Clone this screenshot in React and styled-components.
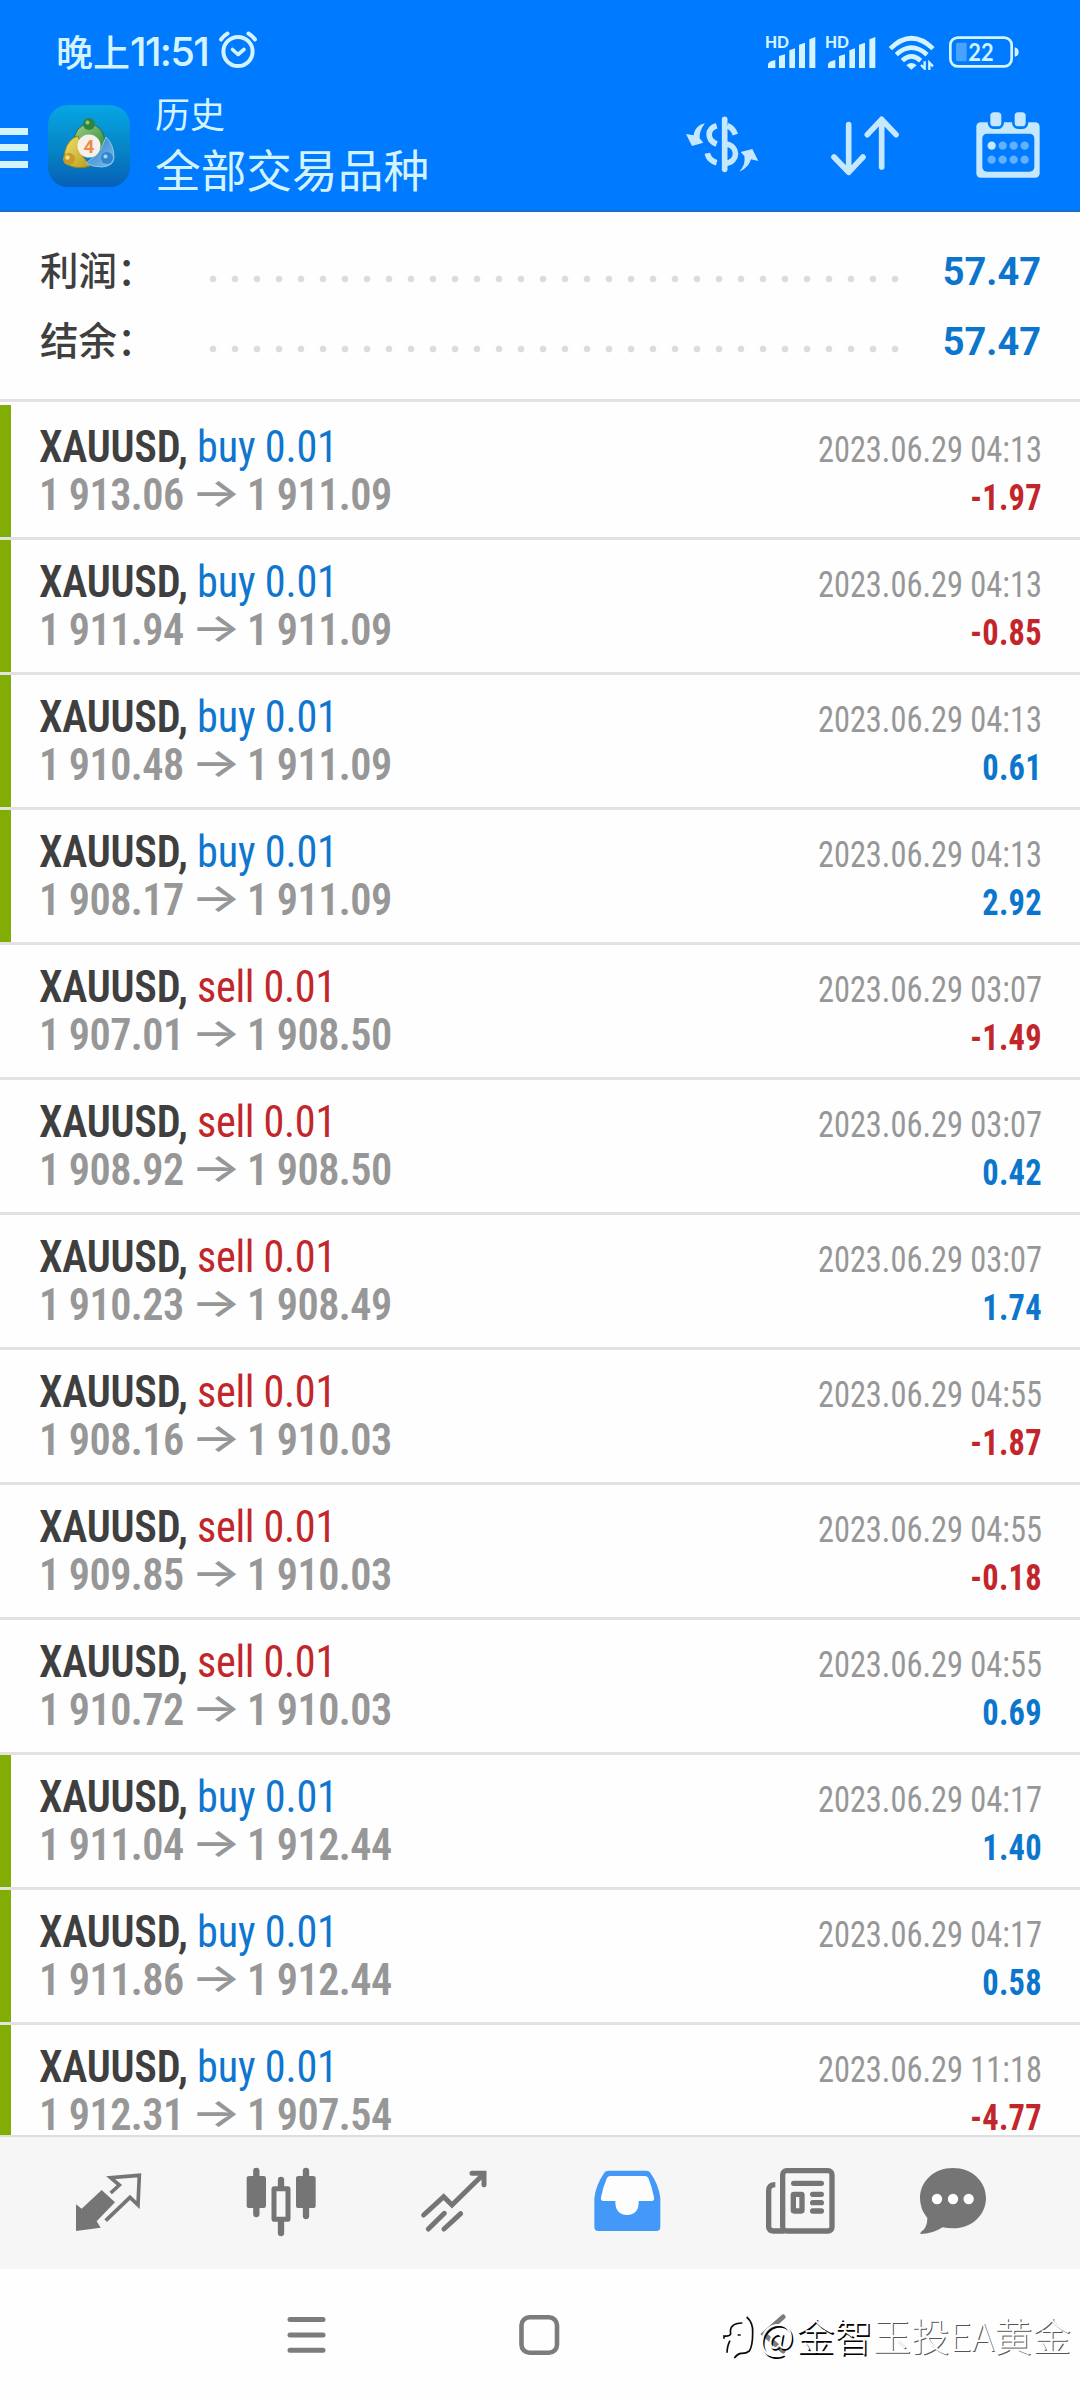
import React from "react";
import styled, { createGlobalStyle, css } from "styled-components";

const color = {
  blue: "#007aff",
  ice: "#d3f3ff",
  iconIce: "#c6e8fc",
  text: "#3f3f3f",
  grey: "#979797",
  icon: "#757575",
  line: "#e2e2e2",
  bar: "#f6f6f6",
  buy: "#0f76cf",
  sell: "#c2262a",
  profit: "#0b76cc",
  green: "#81ad04",
};

const cjk = `"Noto Sans CJK SC", sans-serif`;
const condensed = `"Roboto Condensed", Roboto, sans-serif`;

const GlobalStyle = createGlobalStyle`
  * {
    box-sizing: border-box;
  }
  body {
    margin: 0;
    background: #fdfdfd;
    font-family: Roboto, ${cjk};
    color: ${color.text};
  }
`;

const Screen = styled.div`
  width: 1080px;
  height: 2400px;
  display: flex;
  flex-direction: column;
  overflow: hidden;
  background: #fefefe;
`;

const Header = styled.header`
  height: 212px;
  flex: none;
  background: ${color.blue};
  border-bottom: 2px solid #1a6fca;
  color: ${color.ice};
`;

const StatusBar = styled.div`
  height: 76px;
  padding: 24px 56px 0 56px;
  display: flex;
  align-items: center;
  justify-content: space-between;
`;

const Clock = styled.div`
  display: flex;
  align-items: center;
  font: 500 37px/52px ${cjk};
`;

const ClockText = styled.span`
  display: flex;
  padding-top: 2px;
`;

const Time = styled.span`
  font: 500 40px/52px Inter, sans-serif;
  letter-spacing: -1.7px;
  margin: 1px 10px 0 0;
`;

const StatusIcons = styled.div`
  display: flex;
`;

const Toolbar = styled.div`
  height: 135px;
  display: flex;
  align-items: center;
  padding-right: 32px;
`;

const MenuButton = styled.div`
  width: 28px;
  height: 40px;
  margin-top: 8px;
  display: flex;
  flex-direction: column;
  justify-content: space-between;
`;

const MenuBar = styled.span`
  height: 7px;
  background: ${color.ice};
`;

const Logo = styled.svg`
  width: 82px;
  height: 82px;
  margin: 5px 0 0 20px;
`;

const Titles = styled.div`
  flex: 1;
  margin-left: 25px;
  display: flex;
  flex-direction: column;
  font-family: ${cjk};
`;

const Caption = styled.span`
  font-size: 35px;
  line-height: 48px;
`;

const Title = styled.span`
  font-size: 45.7px;
  line-height: 62px;
`;

const ToolbarIcons = styled.div`
  display: flex;
  gap: 63px;
`;

const Summary = styled.section`
  height: 190px;
  flex: none;
  padding: 24px 39px 0 40px;
  border-bottom: 3px solid ${color.line};
`;

const SummaryRow = styled.div`
  height: 70px;
  display: flex;
  align-items: center;
`;

const SummaryLabel = styled.span`
  width: 162px;
  margin-top: -7px;
  font: 500 38.5px/70px ${cjk};
`;

const Dots = styled.span`
  width: 704px;
  height: 22px;
  margin-top: 15px;
  background: radial-gradient(circle, #dcdcdc 2.8px, transparent 3.8px) 0 0 / 22px 22px;
`;

const SummaryValue = styled.span`
  flex: 1;
  margin-top: 2px;
  text-align: right;
  font: 700 38px/70px Roboto, sans-serif;
  color: ${color.profit};
`;

const Deals = styled.main`
  height: 1733px;
  flex: none;
  padding-top: 3px;
  overflow: hidden;
`;

const Deal = styled.div`
  height: 135px;
  padding: 18px 38px 0 39px;
  display: flex;
  justify-content: space-between;
  border-bottom: 3px solid ${color.line};
  ${(props) =>
    props.$marked &&
    css`
      background: linear-gradient(${color.green}, ${color.green}) 0 0 / 11px 100% no-repeat;
    `}
  font-family: ${condensed};
`;

const DealSide = styled.div`
  display: flex;
  flex-direction: column;
  line-height: 48px;
  white-space: pre;
  ${(props) =>
    props.$end
      ? css`
          align-items: flex-end;
          padding-top: 3px;
          font-size: 36px;
          transform: scaleX(0.9);
          transform-origin: right;
        `
      : css`
          font-size: 44px;
          transform: scaleX(0.96);
          transform-origin: left;
        `}
`;

const Symbol = styled.span`
  font-weight: 600;
  letter-spacing: -0.25px;
`;

const Side = styled.span`
  color: ${(props) => (props.$type === "buy" ? color.buy : color.sell)};
  letter-spacing: ${(props) => (props.$type === "buy" ? -0.2 : -0.35)}px;
`;

const Prices = styled.span`
  display: flex;
  font-weight: 600;
  letter-spacing: -0.6px;
  color: ${color.grey};
`;

const Arrow = styled.span`
  width: 66px;
  text-align: center;
  font: 500 40px/44px Inter, sans-serif;
  transform: scaleX(1.38);
`;

const Date = styled.span`
  color: ${color.grey};
`;

const Profit = styled.span`
  font-weight: 700;
  letter-spacing: 0.3px;
  color: ${(props) => (props.$loss ? color.sell : color.profit)};
`;

const TabBar = styled.nav`
  height: 134px;
  flex: none;
  padding-left: 21px;
  display: flex;
  align-items: center;
  background: ${color.bar};
  border-top: 2px solid #dedede;
`;

const Tab = styled.div`
  width: ${(props) => (props.$last ? 131 : 173)}px;
  display: flex;
  justify-content: center;
  color: ${(props) => (props.$active ? "#4499f8" : color.icon)};
`;

const SystemBar = styled.footer`
  flex: 1;
  position: relative;
  display: flex;
  align-items: flex-start;
  gap: 192px;
  padding: 44px 0 0 286px;
  color: #7c7c7c;
`;

const Watermark = styled.div`
  position: absolute;
  left: 720px;
  top: 37px;
  display: flex;
  align-items: center;
  white-space: nowrap;
  font: 300 38.4px/56px ${cjk};
  color: #fff;
  text-shadow: 1px 1px 0 #555;
`;

const Strong = styled.span`
  text-shadow: 1.5px 1.5px 0 #000;
`;

const At = styled(Strong)`
  margin-right: 2px;
`;

const AlarmIcon = () => (
  <svg width="40" height="40" viewBox="0 0 40 40" fill="none" stroke="currentColor" strokeWidth="4" strokeLinecap="round" strokeLinejoin="round">
    <circle cx="20" cy="21.5" r="14.6" />
    <path d="M14.5 19.5l5.5 5 6-5" strokeWidth="3.6" />
    <path d="M3 9.5Q6 5.5 9.5 3.5M37 9.5Q34 5.5 30.5 3.5" />
  </svg>
);

const SignalIcon = () => (
  <svg width="60" height="40" viewBox="370 90 180 120" fill="currentColor">
    <text x="373" y="145" fontFamily="Lato, sans-serif" fontWeight="900" fontSize="49" textLength="72" lengthAdjust="spacingAndGlyphs">
      HD
    </text>
    <path d="M382 204v-12q3-9 22-12v24zM415 204v-36l18-5v41zM446 204v-53l17-6v59zM475 204v-70l18-6v76zM506 204v-86l18-7v93z" />
  </svg>
);

const WifiIcon = () => (
  <svg width="55" height="40" viewBox="730 90 165 120" fill="none" stroke="currentColor" strokeWidth="14">
    <path d="M749 146Q812 84 877 146M767 164Q812 122 859 164M785 182Q812 156 840 182" />
    <path d="M797 196Q812 182 828 196L812 209Z" fill="currentColor" stroke="none" />
    <path d="M842 182v30h40v-32z" fill={color.blue} stroke="none" />
    <path d="M852 184v22l-11-11M866 210v-22l11 11" strokeWidth="7" />
  </svg>
);

const BatteryIcon = () => (
  <svg width="85" height="40" viewBox="895 90 255 120">
    <rect x="929" y="113" width="184" height="86" rx="22" fill="none" stroke="currentColor" strokeWidth="8" />
    <path d="M952 128h26v56h-26q-6 0-6-6v-44q0-6 6-6z" fill="#4aa2ff" />
    <path d="M1122 142q12 2 12 14t-12 14z" fill="currentColor" />
    <text x="983" y="184" fill="currentColor" fontFamily="Lato, sans-serif" fontWeight="700" fontSize="74" textLength="76" lengthAdjust="spacingAndGlyphs">
      22
    </text>
  </svg>
);

const AppLogo = () => (
  <Logo viewBox="0 0 82 82">
    <defs>
      <linearGradient id="tile" x1="0" y1="0" x2="0" y2="1">
        <stop offset="0" stopColor="#06a6e4" />
        <stop offset="0.55" stopColor="#0684c6" />
        <stop offset="1" stopColor="#075fb6" />
      </linearGradient>
      <linearGradient id="leaf" x1="0" y1="0" x2="1" y2="1">
        <stop offset="0" stopColor="#9fd08a" />
        <stop offset="1" stopColor="#2f8a35" />
      </linearGradient>
      <linearGradient id="gold" x1="0" y1="0" x2="1" y2="1">
        <stop offset="0" stopColor="#f3e36a" />
        <stop offset="1" stopColor="#b99a1c" />
      </linearGradient>
      <linearGradient id="sky" x1="0" y1="0" x2="1" y2="1">
        <stop offset="0" stopColor="#2a78c0" />
        <stop offset="1" stopColor="#7fc0ee" />
      </linearGradient>
    </defs>
    <rect width="82" height="82" rx="20" fill="url(#tile)" />
    <path d="M26 38Q26 20 41 19Q56 20 57 38L50 46L41 36L32 42Z" fill="url(#leaf)" stroke="#2c6b3c" />
    <path d="M30 31Q20 34 17 46Q14 58 20 60Q30 65 42 61L34 50L33 40Z" fill="url(#gold)" stroke="#8c8427" />
    <path d="M58 32Q66 40 66 52Q66 61 54 62Q44 62 38 58L46 52L53 44Z" fill="url(#sky)" stroke="#8fc4e6" />
    <circle cx="41" cy="19" r="6" fill="#2f8440" />
    <circle cx="39.5" cy="17.5" r="2" fill="#8ecb8b" />
    <circle cx="21" cy="54" r="6" fill="#c79a2c" />
    <circle cx="19.5" cy="52.5" r="2.2" fill="#f4dc80" />
    <circle cx="59" cy="53" r="6" fill="#2f86cf" />
    <circle cx="57.5" cy="51.5" r="2" fill="#a5d6f4" />
    <circle cx="41" cy="41" r="11.5" fill="#f5f1ea" />
    <text x="41" y="47.5" textAnchor="middle" fontFamily="Roboto, sans-serif" fontWeight="700" fontSize="19" fill="#ee8a4a">
      4
    </text>
  </Logo>
);

const CurrencyIcon = () => (
  <svg width="80" height="80" viewBox="36 12 240 240" fill="none" stroke={color.iconIce} strokeWidth="17">
    <path
      d="M105 70C85 74 73 88 71 106L48 102L66 138L100 128L89 115C88 98 94 84 105 70ZM208 215C228 206 238 194 243 178L265 183L247 147L212 156L223 168C226 188 220 202 208 215Z"
      fill={color.iconIce}
      stroke="none"
    />
    <path d="M164 58V208" strokeLinecap="round" />
    <path d="M140 77C110 86 110 120 140 132M172 77Q190 84 196 104M168 132C206 138 206 184 168 190M112 160Q116 182 140 188" />
  </svg>
);

const SortIcon = () => (
  <svg width="80" height="80" viewBox="555 311 240 240" fill="none" stroke={color.iconIce} strokeWidth="17" strokeLinecap="round" strokeLinejoin="round">
    <path d="M626 373V514M582 470L626 516L669 470M725 500V358M682 403L725 357L768 403" />
  </svg>
);

const CalendarIcon = () => (
  <svg width="80" height="80" viewBox="985 311 240 240" fill={color.iconIce}>
    <rect x="1010" y="366" width="190" height="166" rx="13" />
    <rect x="1028" y="400" width="156" height="114" rx="14" fill={color.blue} />
    {[1052, 1125].map((x) => (
      <rect key={x} x={x - 4} y="332" width="41" height="50" rx="15" stroke={color.blue} strokeWidth="8" />
    ))}
    {[436, 478].map((cy) =>
      [1056, 1089, 1122, 1155].map((cx) => (
        <circle key={`${cx}-${cy}`} cx={cx} cy={cy} r="12.5" opacity={cx === 1056 && cy === 436 ? 1 : 0.5} />
      ))
    )}
  </svg>
);

const QuotesIcon = () => (
  <svg width="80" height="80" viewBox="54 39 240 240" fill="none" stroke="currentColor" strokeWidth="11">
    <path d="M78 163L95 176L155 120L195 157L140 214L152 233L78 243Z" fill="currentColor" stroke="none" />
    <path d="M182 129L208 105L182 83L268 76L264 165L240 142L167 212" />
  </svg>
);

const ChartIcon = () => (
  <svg width="80" height="80" viewBox="573 39 240 240" fill="none" stroke="currentColor" strokeWidth="19" strokeLinecap="round">
    <path d="M619 63V192M768 63V198M693 90V112M693 216V249" />
    <path
      d="M598 78h43q7 0 7 7v82q0 7-7 7h-43q-8 0-8-7v-82q0-7 8-7zM746 78h43q8 0 8 7v82q0 7-8 7h-43q-8 0-8-7v-82q0-7 8-7z"
      fill="currentColor"
      stroke="none"
    />
    <rect x="672" y="116" width="42" height="92" rx="1" strokeWidth="15" fill={color.bar} />
  </svg>
);

const TradeIcon = () => (
  <svg width="80" height="80" viewBox="1093 39 240 240" fill="none" stroke="currentColor" strokeWidth="15" strokeLinecap="round">
    <path d="M1122 195L1182 140L1207 165L1302 72" />
    <path d="M1267 70H1303V104" />
    <path d="M1136 237L1184 190M1183 237L1233 191" />
  </svg>
);

const HistoryIcon = () => (
  <svg width="80" height="80" viewBox="52 39 240 240">
    <path
      d="M116 62H230Q238 62 242 68Q268 105 272 145V230Q272 243 260 243H86Q74 243 74 230V145Q78 105 104 68Q108 62 116 62Z"
      fill="currentColor"
    />
    <path
      d="M122 78H226Q232 78 236 84Q247 110 253 142Q255 153 246 153H207Q209 194 172 195Q136 194 137 153H102Q92 153 94 142Q100 110 112 84Q115 78 122 78Z"
      fill="#fdfdfd"
    />
  </svg>
);

const NewsIcon = () => (
  <svg width="80" height="80" viewBox="572 39 240 240" fill="none" stroke="currentColor" strokeWidth="16">
    <rect x="640" y="62" width="148" height="181" rx="12" />
    <path d="M618 104Q598 104 598 122V232Q600 243 612 243H645" />
    <path d="M673 100H756M730 133H756M730 158H756M730 183H756" strokeLinecap="round" />
    <rect x="672" y="133" width="26" height="50" rx="2" />
  </svg>
);

const ChatIcon = () => (
  <svg width="80" height="80" viewBox="1026 39 240 240" fill="currentColor">
    <path d="M1149 54C1206 54 1248 94 1248 144S1206 235 1149 235Q1132 235 1118 232Q1088 252 1051 252Q1050 247 1060 240Q1072 228 1072 204Q1050 178 1050 144C1050 94 1092 54 1149 54Z" />
    {[1101, 1149, 1196].map((cx) => (
      <circle key={cx} cx={cx} cy="147" r="15.5" fill="#fff" />
    ))}
  </svg>
);

const RecentsIcon = () => (
  <svg width="40" height="44" viewBox="0 0 40 44" fill="none" stroke="currentColor" strokeWidth="5" strokeLinecap="round">
    <path d="M4 6.5H37M4 22H37M4 37.3H37" />
  </svg>
);

const HomeIcon = () => (
  <svg width="42" height="44" viewBox="0 0 42 44" fill="none" stroke="currentColor" strokeWidth="4.6">
    <rect x="3.5" y="4.3" width="35.5" height="35.5" rx="8" />
  </svg>
);

const BackIcon = () => (
  <svg width="34" height="44" viewBox="0 0 34 44" fill="none" stroke="currentColor" strokeWidth="5" strokeLinecap="round">
    <path d="M31 4L12 21L31 38" />
  </svg>
);

const WatermarkLogo = () => (
  <svg width="39" height="56" viewBox="60 60 117 168" fill="none" stroke="#0a0a0a" strokeWidth="5">
    <path d="M140 93Q160 110 158 140Q158 180 148 195Q138 203 122 202Q112 204 103 216M72 158V150Q88 152 92 144Q86 112 127 111M90 164Q82 178 81 200M113 147h9" />
  </svg>
);

const summary = [
  { label: "利润：", value: "57.47" },
  { label: "结余：", value: "57.47" },
];

const deals = [
  { type: "buy", open: "1 913.06", close: "1 911.09", date: "2023.06.29 04:13", profit: "-1.97" },
  { type: "buy", open: "1 911.94", close: "1 911.09", date: "2023.06.29 04:13", profit: "-0.85" },
  { type: "buy", open: "1 910.48", close: "1 911.09", date: "2023.06.29 04:13", profit: "0.61" },
  { type: "buy", open: "1 908.17", close: "1 911.09", date: "2023.06.29 04:13", profit: "2.92" },
  { type: "sell", open: "1 907.01", close: "1 908.50", date: "2023.06.29 03:07", profit: "-1.49" },
  { type: "sell", open: "1 908.92", close: "1 908.50", date: "2023.06.29 03:07", profit: "0.42" },
  { type: "sell", open: "1 910.23", close: "1 908.49", date: "2023.06.29 03:07", profit: "1.74" },
  { type: "sell", open: "1 908.16", close: "1 910.03", date: "2023.06.29 04:55", profit: "-1.87" },
  { type: "sell", open: "1 909.85", close: "1 910.03", date: "2023.06.29 04:55", profit: "-0.18" },
  { type: "sell", open: "1 910.72", close: "1 910.03", date: "2023.06.29 04:55", profit: "0.69" },
  { type: "buy", open: "1 911.04", close: "1 912.44", date: "2023.06.29 04:17", profit: "1.40" },
  { type: "buy", open: "1 911.86", close: "1 912.44", date: "2023.06.29 04:17", profit: "0.58" },
  { type: "buy", open: "1 912.31", close: "1 907.54", date: "2023.06.29 11:18", profit: "-4.77" },
];

const tabs = [QuotesIcon, ChartIcon, TradeIcon, HistoryIcon, NewsIcon, ChatIcon];

const DealRow = ({ deal }) => (
  <Deal $marked={deal.type === "buy"}>
    <DealSide>
      <span>
        <Symbol>XAUUSD, </Symbol>
        <Side $type={deal.type}>{deal.type} 0.01</Side>
      </span>
      <Prices>
        {deal.open}
        <Arrow>→</Arrow>
        {deal.close}
      </Prices>
    </DealSide>
    <DealSide $end>
      <Date>{deal.date}</Date>
      <Profit $loss={deal.profit.startsWith("-")}>{deal.profit}</Profit>
    </DealSide>
  </Deal>
);

const App = () => (
  <Screen>
    <GlobalStyle />
    <Header>
      <StatusBar>
        <Clock>
          <ClockText>
            晚上<Time>11:51</Time>
          </ClockText>
          <AlarmIcon />
        </Clock>
        <StatusIcons>
          <SignalIcon />
          <SignalIcon />
          <WifiIcon />
          <BatteryIcon />
        </StatusIcons>
      </StatusBar>
      <Toolbar>
        <MenuButton>
          <MenuBar />
          <MenuBar />
          <MenuBar />
        </MenuButton>
        <AppLogo />
        <Titles>
          <Caption>历史</Caption>
          <Title>全部交易品种</Title>
        </Titles>
        <ToolbarIcons>
          <CurrencyIcon />
          <SortIcon />
          <CalendarIcon />
        </ToolbarIcons>
      </Toolbar>
    </Header>
    <Summary>
      {summary.map((row) => (
        <SummaryRow key={row.label}>
          <SummaryLabel>{row.label}</SummaryLabel>
          <Dots />
          <SummaryValue>{row.value}</SummaryValue>
        </SummaryRow>
      ))}
    </Summary>
    <Deals>
      {deals.map((deal, index) => (
        <DealRow key={index} deal={deal} />
      ))}
    </Deals>
    <TabBar>
      {tabs.map((Icon, index) => (
        <Tab key={index} $active={Icon === HistoryIcon} $last={Icon === ChatIcon}>
          <Icon />
        </Tab>
      ))}
    </TabBar>
    <SystemBar>
      <RecentsIcon />
      <HomeIcon />
      <BackIcon />
      <Watermark>
        <WatermarkLogo />
        <At>@</At>
        <Strong>金智</Strong>玉投EA黄金
      </Watermark>
    </SystemBar>
  </Screen>
);

export default App;
